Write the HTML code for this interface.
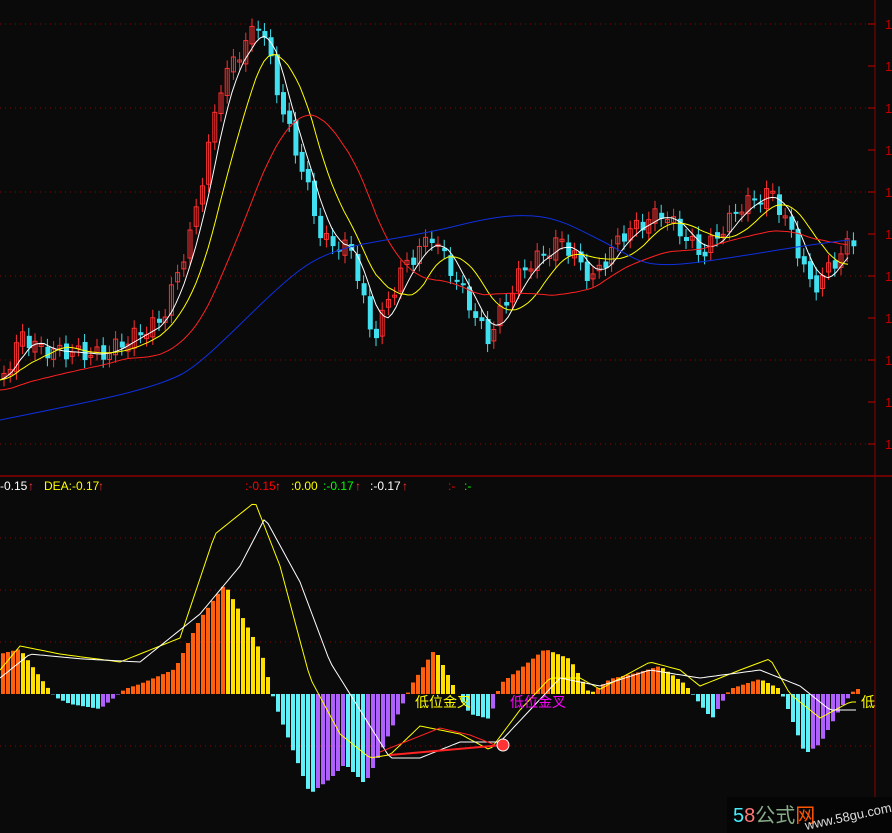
<!DOCTYPE html><html><head><style>body{margin:0;background:#0a0a0a;overflow:hidden}svg{display:block}</style></head><body>
<svg id="s" width="892" height="833" xmlns="http://www.w3.org/2000/svg" style="background:#0a0a0a;font-family:'Liberation Sans',sans-serif">
<g stroke="#8b0000" stroke-dasharray="1,4">
<line x1="0" y1="24" x2="875" y2="24"/><line x1="0" y1="108" x2="875" y2="108"/><line x1="0" y1="192" x2="875" y2="192"/><line x1="0" y1="276" x2="875" y2="276"/><line x1="0" y1="360" x2="875" y2="360"/><line x1="0" y1="444" x2="875" y2="444"/>
<line x1="0" y1="538" x2="875" y2="538"/><line x1="0" y1="590" x2="875" y2="590"/><line x1="0" y1="642" x2="875" y2="642"/><line x1="0" y1="746" x2="875" y2="746"/>
</g>
<line x1="875" y1="0" x2="875" y2="833" stroke="#8b0000"/>
<line x1="0" y1="476" x2="892" y2="476" stroke="#8b0000" stroke-width="1.5"/>
<g id="ticks" fill="#c00000" font-size="13"></g>
<g id="chart"></g>
<g font-size="12">
<text x="0" y="490" fill="#fff">-0.15</text><text x="44" y="490" fill="#ff0">DEA:-0.17</text>
<text x="245" y="490" fill="#f00">:-0.15</text><text x="291" y="490" fill="#ff0">:0.00</text><text x="323" y="490" fill="#0f0">:-0.17</text><text x="370" y="490" fill="#fff">:-0.17</text>
<text x="448" y="490" fill="#f00">:-</text><text x="464" y="490" fill="#0f0">:-</text>
<g fill="#f33"><text x="28" y="490">↑</text><text x="98" y="490">↑</text><text x="275" y="490">↑</text><text x="355" y="490">↑</text><text x="402" y="490">↑</text></g>
</g>
<path d="M380,752 L410,740 L440,728 L470,735 L495,745" fill="none" stroke="#f22"/>
<line x1="390" y1="755" x2="503" y2="745" stroke="#f22" stroke-width="2"/>
<g font-family="'Liberation Sans','Noto Sans CJK SC',sans-serif" font-size="14">
<text x="415" y="707" fill="#ff0">低位金叉</text><text x="510" y="707" fill="#f0f">低位金叉</text><text x="861" y="707" fill="#ff0">低</text>
</g>
<circle cx="503" cy="745" r="6" fill="#f33" stroke="#fff"/>
<rect x="727" y="797" width="165" height="36" fill="#050505"/>
<text x="733" y="822" font-size="20" font-family="'Liberation Sans','Noto Sans CJK SC',sans-serif"><tspan fill="#4ef">5</tspan><tspan fill="#f77">8</tspan><tspan fill="#8a8">公式</tspan><tspan fill="#f50">网</tspan></text>
<text x="806" y="830" font-size="13" fill="#ddd" transform="rotate(-12 806 830)">www.58gu.com</text>
</svg>
<script>
function itp(p,x){for(let i=0;i<p.length-1;i++){if(x>=p[i][0]&&x<=p[i+1][0]){let t=(x-p[i][0])/(p[i+1][0]-p[i][0]);return p[i][1]+t*(p[i+1][1]-p[i][1]);}}return p[p.length-1][1];}
const P=[[0,380],[20,335],[40,350],[100,355],[160,320],[190,230],[220,80],[258,20],[280,110],[300,170],[320,240],[350,250],[370,340],[400,270],[430,235],[460,290],[485,340],[520,270],[560,240],[590,280],[620,235],[660,212],[700,255],[740,205],[770,192],[790,235],[810,290],[850,240]];
let g='';let prev=null;
for(let x=2;x<852;x+=6.2){let c=itp(P,x)+Math.sin(x*1.7)*8;let o=prev===null?c+5:prev+Math.sin(x*3.1)*4;let up=c<o;let col=up?'#ff3030':'#40e0f0';let t=Math.min(o,c),b=Math.max(o,c);if(b-t<2)b=t+2;
g+=`<line x1="${x+2}" x2="${x+2}" y1="${t-8}" y2="${b+8}" stroke="${col}"/>`;
g+=up?`<rect x="${x}" y="${t}" width="4" height="${b-t}" fill="none" stroke="${col}"/>`:`<rect x="${x}" y="${t}" width="5" height="${b-t}" fill="${col}"/>`;prev=c;}
function ma(n,off,col){let s='';for(let x=0;x<852;x+=4){let v=0,k=0;for(let j=0;j<n;j++){let xx=x-j*6;if(xx<0)xx=0;v+=itp(P,xx);k++;}s+=(x?'L':'M')+x+','+(v/k+off).toFixed(1);}return `<path d="${s}" fill="none" stroke="${col}"/>`;}
g+=ma(5,0,'#fff')+ma(10,0,'#ff0')+ma(20,10,'#f22');
g+=`<path d="M0,420 C100,400 150,390 180,375 S260,300 300,270 S380,245 460,225 S560,220 600,240 S640,270 700,262 S800,245 850,240" fill="none" stroke="#1030e0"/>`;
const H=[[0,40],[20,45],[45,10],[55,-3],[70,-10],[100,-15],[125,5],[140,10],[175,25],[200,75],[225,110],[262,40],[275,-10],[310,-100],[330,-85],[345,-70],[365,-90],[380,-60],[405,-5],[412,10],[435,45],[455,5],[470,-20],[490,-25],[500,10],[520,25],[545,45],[570,35],[590,0],[610,15],[640,22],[660,28],[685,10],[700,-10],[712,-25],[730,5],[760,15],[780,5],[790,-20],[805,-60],[820,-50],[840,-15],[855,5]];
let pv=0;for(let x=1;x<857;x+=5){let h=itp(H,x+2);let col;if(h>=0)col=h>=pv?'#ff6010':'#ffe000';else col=h<=pv?'#60f0f8':'#b060ff';pv=h;
let y=h>=0?694-h:694;g+=`<rect x="${x}" y="${y}" width="4" height="${Math.abs(h)}" fill="${col}"/>`;}
function ln(p,col,off){let s='';for(let x=0;x<860;x+=4)s+=(x?'L':'M')+x+','+(694-itp(p,x)*1.6-off).toFixed(1);return `<path d="${s}" fill="none" stroke="${col}"/>`;}
const D=[[0,15],[20,30],[60,25],[120,20],[180,35],[215,100],[255,120],[280,80],[310,10],[340,-25],[370,-40],[390,-38],[420,-20],[460,-25],[490,-35],[520,-10],[550,10],[580,10],[600,3],[650,20],[680,15],[700,5],[740,15],[770,22],[790,0],[820,-15],[850,-5]];
const E=[[0,10],[30,25],[80,22],[140,20],[200,50],[240,80],[265,110],[300,70],[330,20],[360,-10],[390,-40],[420,-40],[460,-30],[500,-30],[530,-10],[560,10],[600,5],[650,15],[700,10],[760,15],[800,5],[830,-10],[850,-10]];
g+=ln(D,'#ff0',0)+ln(E,'#fff',0);
document.getElementById('chart').innerHTML=g;
let t='';for(let y=24;y<470;y+=42)t+=`<line x1="868" y1="${y}" x2="875" y2="${y}" stroke="#c00000"/><text x="885" y="${y+5}">1</text>`;document.getElementById('ticks').innerHTML=t;
</script>
</body></html>
